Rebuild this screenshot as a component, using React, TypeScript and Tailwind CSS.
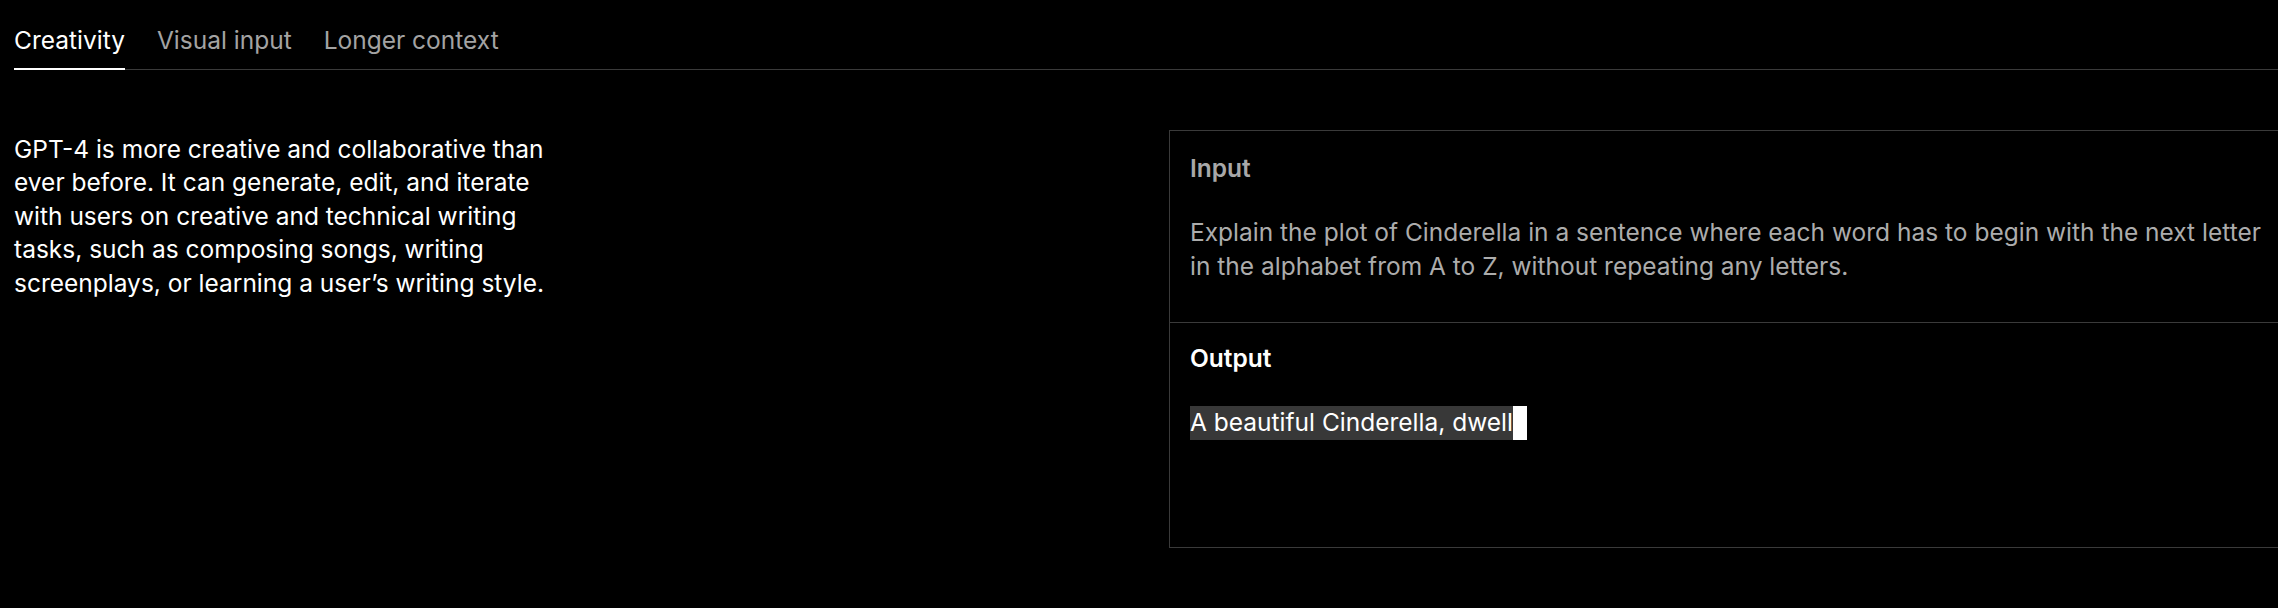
import React from 'react';

const tabs = ['Creativity', 'Visual input', 'Longer context'];

const intro = [
  'GPT-4 is more creative and collaborative than',
  'ever before. It can generate, edit, and iterate',
  'with users on creative and technical writing',
  'tasks, such as composing songs, writing',
  'screenplays, or learning a user\u2019s writing style.',
];

const prompt = [
  'Explain the plot of Cinderella in a sentence where each word has to begin with the next letter',
  'in the alphabet from A to Z, without repeating any letters.',
];

export default function App() {
  return (
    <div
      className="min-h-screen w-full bg-black overflow-hidden text-[24.5px] leading-[33.6px] antialiased"
      style={{ fontFamily: 'Inter, "Liberation Sans", Arial, sans-serif' }}
    >
      {/* Tabs */}
      <div className="pl-[14px]">
        <div className="flex gap-8 pt-[24px] border-b border-[#3a3a3a]">
          {tabs.map((t, i) => (
            <button
              key={t}
              className={`pb-[10px] -mb-px ${
                i === 0 ? 'text-white border-b-2 border-white' : 'text-[#a3a3a3] border-b-2 border-transparent'
              }`}
            >
              {t}
            </button>
          ))}
        </div>
      </div>

      <div className="flex mt-[60px] pl-[14px]">
        {/* Intro copy */}
        <div className="w-[1155px] shrink-0 pt-[3px] text-white">
          {intro.map((l) => (
            <div key={l} className="whitespace-nowrap">{l}</div>
          ))}
        </div>

        {/* Example panel */}
        <div className="flex-1 border border-r-0 border-[#3a3a3a]">
          <div className="pl-[20px] pt-[21px] pb-[39px] border-b border-[#3a3a3a]">
            <div className="font-semibold text-[#a8a8a8]">Input</div>
            <div className="mt-[31px] text-[#acacac]">
              {prompt.map((l) => (
                <div key={l} className="whitespace-nowrap">{l}</div>
              ))}
            </div>
          </div>
          <div className="pl-[20px] pt-[19px] pb-[107px]">
            <div className="font-semibold text-white">Output</div>
            <div className="mt-[30px] flex items-start">
              <span className="bg-[#383838] text-white whitespace-nowrap">A beautiful Cinderella, dwell</span>
              <span className="inline-block w-[14px] h-[33.6px] bg-white" />
            </div>
          </div>
        </div>
      </div>
    </div>
  );
}
